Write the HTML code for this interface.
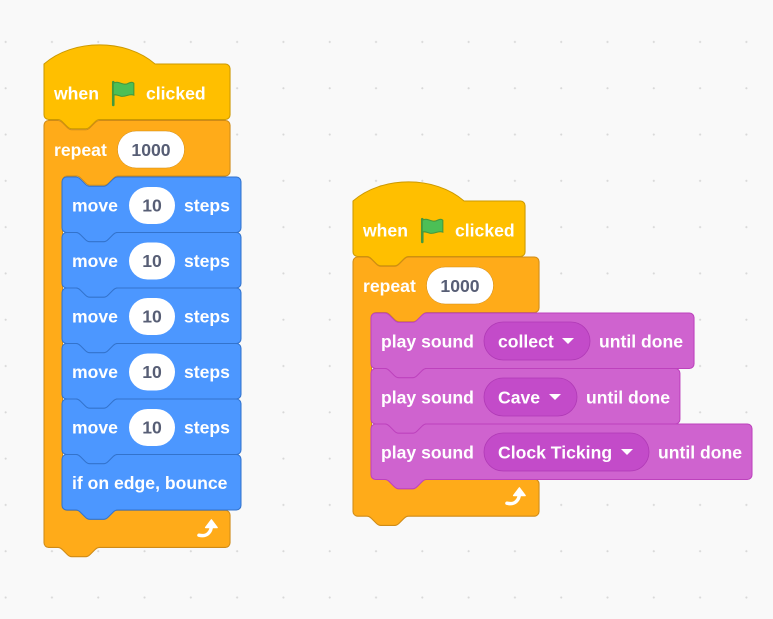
<!DOCTYPE html><html><head><style>
html,body{margin:0;padding:0}
body{width:773px;height:619px;overflow:hidden;background-color:#F9F9F9;background-image:radial-gradient(circle,#d8d8d8 0.9px,transparent 1.2px);background-size:46.3px 46.3px;background-position:-17.5px 18.8px}
svg{position:absolute;left:0;top:0}
text{font-family:"Liberation Sans",Arial,sans-serif;font-weight:bold;font-size:17.6px}
.w{fill:#fff}.g{fill:#575E75}
</style></head><body>
<svg width="773" height="619" viewBox="0 0 773 619">
<defs>
<symbol id="flag" viewBox="0 0 24 24" overflow="visible">
<path d="M3,2 L3,23" stroke="#45993D" stroke-width="2.4" stroke-linecap="round"/>
<path d="M3,3 C8,0 12,6 17,3 C19,2 21,2 22,3 L22,14 C18,12 15,16 10,15 C7,14 5,13 3,14 Z" fill="#4CBF56" stroke="#45993D" stroke-width="1"/>
</symbol>
<symbol id="arrow" viewBox="0 0 24 24" overflow="visible">
<path d="M2,19 C10,21 15,16 15,9" fill="none" stroke="#fff" stroke-width="3.6" stroke-linecap="round"/>
<path d="M9,11 L15,3 L21,11 Z" fill="#fff" stroke="#fff" stroke-width="1.5" stroke-linejoin="round"/>
</symbol>
</defs>

<g transform="translate(44,64) scale(1.157)" fill="#FFBF00" stroke="#CC9900" stroke-width="0.9">
<path d="M0,0 c25,-22 71,-22 96,0 H156.8 a4,4 0 0 1 4,4 V44 a4,4 0 0 1 -4,4 H48 c-2,0 -3,1 -4,2 l-4,4 c-1,1 -2,2 -4,2 h-12 c-2,0 -3,-1 -4,-2 l-4,-4 c-1,-1 -2,-2 -4,-2 H4 a4,4 0 0 1 -4,-4 Z"/>
</g>
<g transform="translate(44,120.5) scale(1.157)" fill="#FFAB19" stroke="#CF8B17" stroke-width="0.9">
<path d="M0,4 a4,4 0 0 1 4,-4 H12 c2,0 3,1 4,2 l4,4 c1,1 2,2 4,2 h12 c2,0 3,-1 4,-2 l4,-4 c1,-1 2,-2 4,-2 H156.8 a4,4 0 0 1 4,4 V44 a4,4 0 0 1 -4,4 H64 c-2,0 -3,1 -4,2 l-4,4 c-1,1 -2,2 -4,2 h-12 c-2,0 -3,-1 -4,-2 l-4,-4 c-1,-1 -2,-2 -4,-2 H20 a4,4 0 0 0 -4,4 V333 a4,4 0 0 0 4,4 H156.8 a4,4 0 0 1 4,4 V365 a4,4 0 0 1 -4,4 H48 c-2,0 -3,1 -4,2 l-4,4 c-1,1 -2,2 -4,2 h-12 c-2,0 -3,-1 -4,-2 l-4,-4 c-1,-1 -2,-2 -4,-2 H4 a4,4 0 0 1 -4,-4 Z"/>
</g>
<g fill="#4C97FF" stroke="#3373CC" stroke-width="0.9">
<path id="mv" transform="translate(62,177) scale(1.157)" d="M0,4 a4,4 0 0 1 4,-4 H12 c2,0 3,1 4,2 l4,4 c1,1 2,2 4,2 h12 c2,0 3,-1 4,-2 l4,-4 c1,-1 2,-2 4,-2 H150.7 a4,4 0 0 1 4,4 V44 a4,4 0 0 1 -4,4 H48 c-2,0 -3,1 -4,2 l-4,4 c-1,1 -2,2 -4,2 h-12 c-2,0 -3,-1 -4,-2 l-4,-4 c-1,-1 -2,-2 -4,-2 H4 a4,4 0 0 1 -4,-4 Z"/>
<use href="#mv" transform="translate(0,55.5)"/>
<use href="#mv" transform="translate(0,111)"/>
<use href="#mv" transform="translate(0,166.5)"/>
<use href="#mv" transform="translate(0,222)"/>
<use href="#mv" transform="translate(0,277.5)"/>
</g>
<text x="54" y="99.5" class="w">when</text>
<use href="#flag" x="110" y="80" width="26" height="26"/>
<text x="146" y="99.5" class="w">clicked</text>
<text x="54" y="156" class="w">repeat</text>
<rect x="117.5" y="131" width="67" height="37" rx="18.5" fill="#fff" stroke="#CF8B17" stroke-width="0.5"/>
<text x="151" y="156" class="g" text-anchor="middle">1000</text>
<g>
<text x="72" y="211.5" class="w">move</text><rect x="129" y="187" width="46" height="37" rx="18.5" fill="#fff"/><text x="152" y="211.5" class="g" text-anchor="middle">10</text><text x="184" y="211.5" class="w">steps</text>
<text x="72" y="267" class="w">move</text><rect x="129" y="242.5" width="46" height="37" rx="18.5" fill="#fff"/><text x="152" y="267" class="g" text-anchor="middle">10</text><text x="184" y="267" class="w">steps</text>
<text x="72" y="322.5" class="w">move</text><rect x="129" y="298" width="46" height="37" rx="18.5" fill="#fff"/><text x="152" y="322.5" class="g" text-anchor="middle">10</text><text x="184" y="322.5" class="w">steps</text>
<text x="72" y="378" class="w">move</text><rect x="129" y="353.5" width="46" height="37" rx="18.5" fill="#fff"/><text x="152" y="378" class="g" text-anchor="middle">10</text><text x="184" y="378" class="w">steps</text>
<text x="72" y="433.5" class="w">move</text><rect x="129" y="409" width="46" height="37" rx="18.5" fill="#fff"/><text x="152" y="433.5" class="g" text-anchor="middle">10</text><text x="184" y="433.5" class="w">steps</text>
<text x="72" y="489" class="w">if on edge, bounce</text>
</g>
<use href="#arrow" x="197" y="517" width="23" height="23"/>

<g transform="translate(353,201) scale(1.157)" fill="#FFBF00" stroke="#CC9900" stroke-width="0.9">
<path d="M0,0 c25,-22 71,-22 96,0 H144.7 a4,4 0 0 1 4,4 V44 a4,4 0 0 1 -4,4 H48 c-2,0 -3,1 -4,2 l-4,4 c-1,1 -2,2 -4,2 h-12 c-2,0 -3,-1 -4,-2 l-4,-4 c-1,-1 -2,-2 -4,-2 H4 a4,4 0 0 1 -4,-4 Z"/>
</g>
<g transform="translate(353,257) scale(1.157)" fill="#FFAB19" stroke="#CF8B17" stroke-width="0.9">
<path d="M0,4 a4,4 0 0 1 4,-4 H12 c2,0 3,1 4,2 l4,4 c1,1 2,2 4,2 h12 c2,0 3,-1 4,-2 l4,-4 c1,-1 2,-2 4,-2 H156.8 a4,4 0 0 1 4,4 V44 a4,4 0 0 1 -4,4 H64 c-2,0 -3,1 -4,2 l-4,4 c-1,1 -2,2 -4,2 h-12 c-2,0 -3,-1 -4,-2 l-4,-4 c-1,-1 -2,-2 -4,-2 H20 a4,4 0 0 0 -4,4 V188 a4,4 0 0 0 4,4 H156.8 a4,4 0 0 1 4,4 V220 a4,4 0 0 1 -4,4 H48 c-2,0 -3,1 -4,2 l-4,4 c-1,1 -2,2 -4,2 h-12 c-2,0 -3,-1 -4,-2 l-4,-4 c-1,-1 -2,-2 -4,-2 H4 a4,4 0 0 1 -4,-4 Z"/>
</g>
<g fill="#CF63CF" stroke="#BD42BD" stroke-width="0.9">
<path transform="translate(371,313) scale(1.157)" d="M0,4 a4,4 0 0 1 4,-4 H12 c2,0 3,1 4,2 l4,4 c1,1 2,2 4,2 h12 c2,0 3,-1 4,-2 l4,-4 c1,-1 2,-2 4,-2 H275.2 a4,4 0 0 1 4,4 V44 a4,4 0 0 1 -4,4 H48 c-2,0 -3,1 -4,2 l-4,4 c-1,1 -2,2 -4,2 h-12 c-2,0 -3,-1 -4,-2 l-4,-4 c-1,-1 -2,-2 -4,-2 H4 a4,4 0 0 1 -4,-4 Z"/>
<path transform="translate(371,368.5) scale(1.157)" d="M0,4 a4,4 0 0 1 4,-4 H12 c2,0 3,1 4,2 l4,4 c1,1 2,2 4,2 h12 c2,0 3,-1 4,-2 l4,-4 c1,-1 2,-2 4,-2 H263 a4,4 0 0 1 4,4 V44 a4,4 0 0 1 -4,4 H48 c-2,0 -3,1 -4,2 l-4,4 c-1,1 -2,2 -4,2 h-12 c-2,0 -3,-1 -4,-2 l-4,-4 c-1,-1 -2,-2 -4,-2 H4 a4,4 0 0 1 -4,-4 Z"/>
<path transform="translate(371,424) scale(1.157)" d="M0,4 a4,4 0 0 1 4,-4 H12 c2,0 3,1 4,2 l4,4 c1,1 2,2 4,2 h12 c2,0 3,-1 4,-2 l4,-4 c1,-1 2,-2 4,-2 H325.3 a4,4 0 0 1 4,4 V44 a4,4 0 0 1 -4,4 H48 c-2,0 -3,1 -4,2 l-4,4 c-1,1 -2,2 -4,2 h-12 c-2,0 -3,-1 -4,-2 l-4,-4 c-1,-1 -2,-2 -4,-2 H4 a4,4 0 0 1 -4,-4 Z"/>
</g>
<text x="363" y="236.5" class="w">when</text>
<use href="#flag" x="419" y="217" width="26" height="26"/>
<text x="455" y="236.5" class="w">clicked</text>
<text x="363" y="292" class="w">repeat</text>
<rect x="426.5" y="267" width="67" height="37" rx="18.5" fill="#fff" stroke="#CF8B17" stroke-width="0.5"/>
<text x="460" y="292" class="g" text-anchor="middle">1000</text>

<g fill="#C34BC9" stroke="#B03AB6" stroke-width="0.8">
<rect x="484" y="322" width="106" height="38" rx="19"/>
<rect x="484" y="378" width="93" height="38" rx="19"/>
<rect x="484" y="433" width="165" height="38" rx="19"/>
</g>
<g fill="#fff">
<path d="M562,338 h12 l-6,6 z"/>
<path d="M549,394 h12 l-6,6 z"/>
<path d="M621,449 h12 l-6,6 z"/>
</g>
<text x="381" y="347.5" class="w">play sound</text><text x="498" y="347.5" class="w">collect</text><text x="599" y="347.5" class="w">until done</text>
<text x="381" y="403.5" class="w">play sound</text><text x="498" y="403.5" class="w">Cave</text><text x="586" y="403.5" class="w">until done</text>
<text x="381" y="458.5" class="w">play sound</text><text x="498" y="458.5" class="w">Clock Ticking</text><text x="658" y="458.5" class="w">until done</text>
<use href="#arrow" x="505" y="485" width="23" height="23"/>
</svg>
</body></html>
